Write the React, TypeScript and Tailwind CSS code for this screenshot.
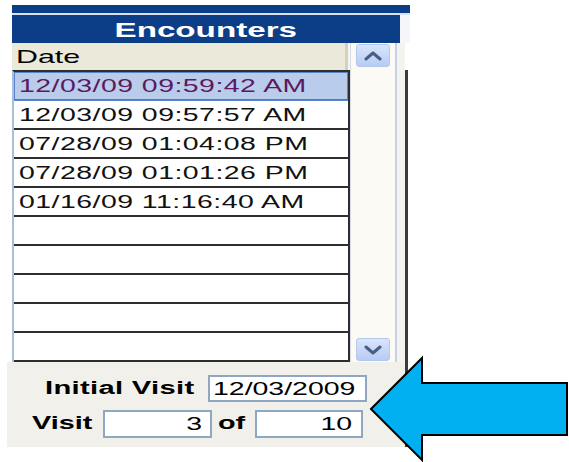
import React from 'react'

const ENCOUNTERS = [
  '12/03/09 09:59:42 AM',
  '12/03/09 09:57:57 AM',
  '07/28/09 01:04:08 PM',
  '07/28/09 01:01:26 PM',
  '01/16/09 11:16:40 AM',
]

const ROW_COUNT = 10

function Chevron({ up }: { up?: boolean }) {
  return (
    <svg width="20" height="10" viewBox="0 0 20 10">
      <polyline
        points={up ? '3,8 10,2 17,8' : '3,2 10,8 17,2'}
        fill="none"
        stroke="#4a5d84"
        strokeWidth="3"
        strokeLinejoin="round"
        strokeLinecap="round"
      />
    </svg>
  )
}

function ScrollButton({ up }: { up?: boolean }) {
  return (
    <div className="mx-[5px] flex h-[23px] items-center justify-center rounded-[3px] border border-[#b4c8ee] bg-gradient-to-b from-[#dae5fb] to-[#b7cbf3]">
      <Chevron up={up} />
    </div>
  )
}

export default function App() {
  const rows = Array.from({ length: ROW_COUNT }, (_, i) => ENCOUNTERS[i] ?? '')

  return (
    <div
      className="relative h-[462px] w-[569px] overflow-hidden bg-white pl-[7px] pt-[5px]"
      style={{ fontFamily: '"Liberation Sans", Arial, sans-serif' }}
    >
      <div className="w-[403px]">
        {/* title bar */}
        <div className="ml-[5px]">
          <div className="h-[8px] bg-[#0c3e87]" />
          <div className="h-[2px] bg-[#d6e1f1]" />
          <div className="flex h-[28px]">
            <div className="flex w-[388px] items-center justify-center bg-[#0c3e87]">
              <span className="inline-block scale-x-[1.58] text-[21px] font-bold leading-none text-white">
                Encounters
              </span>
            </div>
            <div className="flex-1 bg-[#f4f6f9]" />
          </div>
        </div>

        {/* grid + scrollbar */}
        <div className="flex h-[319px]">
          <div className="w-[5px] bg-white" />
          <div className="w-[338px]">
            <div className="flex h-[27px]">
              <div className="flex w-[333px] items-center bg-[#ebe9d9] pl-[4px]">
                <span className="inline-block origin-left scale-x-[1.6] text-[19px] leading-none text-black">
                  Date
                </span>
              </div>
              <div className="w-[3px] bg-[#d3d0c0]" />
              <div className="flex-1 bg-[#f6f5ef]" />
            </div>
            <div className="border-l-2 border-r-2 border-t-2 border-l-[#a9bedd] border-r-[#2e2e2e] border-t-[#2e2e2e]">
              {rows.map((text, i) => (
                <div
                  key={i}
                  className={`flex h-[29px] items-center border-b-2 pl-[5px] ${
                    i === 0
                      ? 'border-b-[#4d7ac6] bg-[#b9cceb] text-[#5b1b5e] outline outline-1 -outline-offset-1 outline-[#5a84c9]'
                      : 'border-b-[#2e2e2e] bg-white text-[#111]'
                  }`}
                >
                  <span className="inline-block origin-left scale-x-[1.58] text-[18px] leading-none tracking-[0.3px]">
                    {text}
                  </span>
                </div>
              ))}
            </div>
          </div>
          <div className="flex w-[47px] flex-col justify-between border-l border-r-2 border-l-[#d7dbe4] border-r-[#c3d2ea] bg-[#fbfaf4] py-[1px]">
            <ScrollButton up />
            <ScrollButton />
          </div>
          <div className="flex w-[13px]">
            <div className="w-[8px] bg-[#f4f3ee]" />
            <div className="mt-[27px] w-[3px] bg-[#3b3b3b]" />
          </div>
        </div>

        {/* visit fields */}
        <div className="flex h-[85px]">
          <div className="w-[398px] bg-[#f1f0ea] pt-[13px]">
            <div className="flex items-center">
              <div className="w-[201px] pl-[38px]">
                <span className="inline-block origin-left scale-x-[1.62] text-[18px] font-bold leading-none tracking-[0.2px] text-black">
                  Initial Visit
                </span>
              </div>
              <div className="flex h-[27px] w-[159px] items-center border-2 border-[#8ea8c4] bg-white pl-[3px]">
                <span className="inline-block origin-left scale-x-[1.58] text-[18px] leading-none text-black">
                  12/03/2009
                </span>
              </div>
            </div>
            <div className="mt-[8px] flex items-center">
              <div className="w-[96px] pl-[25px]">
                <span className="inline-block origin-left scale-x-[1.6] text-[18px] font-bold leading-none text-black">
                  Visit
                </span>
              </div>
              <div className="flex h-[28px] w-[109px] items-center justify-end border-2 border-[#8ea8c4] bg-white pr-[8px]">
                <span className="inline-block origin-right scale-x-[1.58] text-[18px] leading-none text-black">
                  3
                </span>
              </div>
              <div className="w-[43px] pl-[6px]">
                <span className="inline-block origin-left scale-x-[1.6] text-[18px] font-bold leading-none text-black">
                  of
                </span>
              </div>
              <div className="flex h-[28px] w-[108px] items-center justify-end border-2 border-[#8ea8c4] bg-white pr-[9px]">
                <span className="inline-block origin-right scale-x-[1.58] text-[18px] leading-none text-black">
                  10
                </span>
              </div>
            </div>
          </div>
          <div className="w-[3px] bg-[#3b3b3b]" />
        </div>
      </div>

      {/* callout arrow */}
      <svg className="absolute left-0 top-0" width="569" height="462" viewBox="0 0 569 462">
        <polygon
          points="371,409 422,358 422,383 567,383 567,435 422,435 422,460"
          fill="#00b0f0"
          stroke="#000"
          strokeWidth="2"
          strokeLinejoin="miter"
        />
      </svg>
    </div>
  )
}
